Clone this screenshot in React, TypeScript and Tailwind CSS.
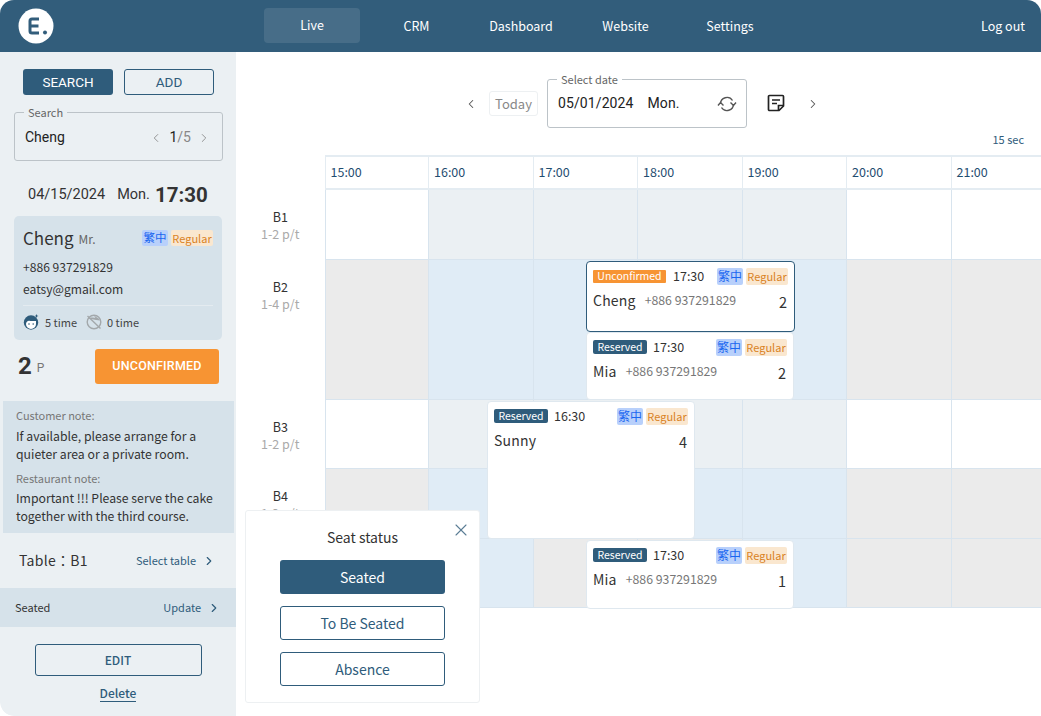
import { ChevronLeft, ChevronRight, X } from 'lucide-react'

const times = ['15:00', '16:00', '17:00', '18:00', '19:00', '20:00', '21:00']
const navItems = ['CRM', 'Dashboard', 'Website', 'Settings']

// cell fills per row, one per time column
const W = 'bg-white'
const S = 'bg-[#ebf0f3]'
const G = 'bg-[#ebebeb]'
const B = 'bg-[#e0ecf6]'

const rows = [
  { name: 'B1', seats: '1-2 p/t', h: 'h-[70px]', cells: [W, S, S, S, S, W, W] },
  { name: 'B2', seats: '1-4 p/t', h: 'h-[140px]', cells: [G, B, B, B, B, G, G] },
  { name: 'B3', seats: '1-2 p/t', h: 'h-[69px]', cells: [W, S, S, S, S, W, W] },
  { name: 'B4', seats: '1-2 p/t', h: 'h-[70px]', cells: [G, B, B, B, B, G, G] },
  { name: 'B5', seats: '1-2 p/t', h: 'h-[69px]', cells: [G, B, G, G, B, G, G] },
]

function Tags() {
  return (
    <div className="ml-auto flex items-center gap-[3px]">
      <span className="flex h-[17px] w-[26px] items-center justify-center rounded-[2px] bg-[#b8d0fb] text-[12px] text-[#1a66f0]">
        繁中
      </span>
      <span className="flex h-[17px] w-[42px] items-center justify-center rounded-[2px] bg-[#fae7cf] text-[11px] text-[#d9821f]">
        Regular
      </span>
    </div>
  )
}

function Booking({
  className,
  status,
  time,
  name,
  phone,
  count,
}: {
  className: string
  status: 'Unconfirmed' | 'Reserved'
  time: string
  name: string
  phone?: string
  count: number
}) {
  return (
    <div className={`absolute rounded-[4px] border bg-white px-[6px] pt-[5px] ${className}`}>
      <div className="flex h-[18px] items-center">
        {status === 'Unconfirmed' ? (
          <span className="mr-[7px] flex h-[13px] w-[73px] items-center justify-center rounded-[1px] bg-[#f79433] text-[10.5px] text-white">
            {status}
          </span>
        ) : (
          <span className="mr-[6px] flex h-[14px] w-[54px] items-center justify-center rounded-[2px] bg-[#2f5c7b] text-[10.5px] text-white">
            {status}
          </span>
        )}
        <span className="text-[12.5px] text-[#333]">{time}</span>
        <Tags />
      </div>
      <div className="mt-[2px] flex items-center text-[#333]">
        <span className="text-[14px] leading-[22px] tracking-[0.2px]">{name}</span>
        {phone && <span className="ml-[9px] text-[12.3px] text-[#777]">{phone}</span>}
        <span className="mt-[4px] ml-auto pr-[1px] text-[14.5px]">{count}</span>
      </div>
    </div>
  )
}

function Timetable() {
  return (
    <div className="relative grid grid-cols-[88.5px_repeat(7,104.5px)] text-[#2f5c7b]">
      <div className="h-[35px]" />
      {times.map((t, i) => (
        <div
          key={t}
          className={`flex h-[35px] items-center border-t-2 border-r border-b-2 border-[#e4ecf2] pl-[5px] text-[12.5px] text-[#1f4d70] ${i === 0 ? 'border-l' : ''}`}
        >
          {t}
        </div>
      ))}
      {rows.map((row) => (
        <div key={row.name} className="contents">
          <div className={`${row.h} pt-[18px] text-center text-[12.5px] leading-[17px]`}>
            <div className="text-[#333]">{row.name}</div>
            <div className="text-[#aaa]">{row.seats}</div>
          </div>
          {row.cells.map((c, i) => (
            <div key={i} className={`${row.h} ${c} border-r border-b border-[#d8e4ee] ${i === 0 ? 'border-l' : ''}`} />
          ))}
        </div>
      ))}

      <Booking
        className="top-[106px] left-[350px] h-[71px] w-[209px] border-[#2f5c7b]"
        status="Unconfirmed"
        time="17:30"
        name="Cheng"
        phone="+886 937291829"
        count={2}
      />
      <Booking
        className="top-[177px] left-[350px] h-[68px] w-[208px] border-[#dfe8ef]"
        status="Reserved"
        time="17:30"
        name="Mia"
        phone="+886 937291829"
        count={2}
      />
      <Booking
        className="top-[246px] left-[251px] h-[138px] w-[208px] border-[#dfe8ef]"
        status="Reserved"
        time="16:30"
        name="Sunny"
        count={4}
      />
      <Booking
        className="top-[385px] left-[350px] h-[69px] w-[208px] border-[#dfe8ef]"
        status="Reserved"
        time="17:30"
        name="Mia"
        phone="+886 937291829"
        count={1}
      />

      {/* seat status popover */}
      <div className="absolute top-[355px] left-[9px] flex h-[193px] w-[235px] flex-col items-center rounded-[3px] border border-[#edf0f2] bg-white pt-[16px] text-[#2f5c7b]">
        <X className="absolute top-[9px] right-[8px] h-[20px] w-[20px] text-[#5b7d95]" strokeWidth={1.3} />
        <div className="text-[14px] leading-[20px] text-[#333]">Seat status</div>
        <button
          type="button"
          className="mt-[13px] h-[34px] w-[165px] rounded-[3px] bg-[#2f5c7b] text-[14px] text-white"
        >
          Seated
        </button>
        <button type="button" className="mt-[12px] h-[34px] w-[165px] rounded-[3px] border border-[#2f5c7b] text-[14px]">
          To Be Seated
        </button>
        <button type="button" className="mt-[12px] h-[34px] w-[165px] rounded-[3px] border border-[#2f5c7b] text-[14px]">
          Absence
        </button>
      </div>
    </div>
  )
}

function Sidebar() {
  return (
    <aside className="flex w-[236px] shrink-0 flex-col rounded-bl-[14px] bg-[#ebf0f3] text-[#333]">
      <div className="flex gap-[11px] pt-[17px] pl-[23px] font-['Roboto',sans-serif] text-[13.5px]">
        <button type="button" className="h-[26px] w-[90px] rounded-[3px] bg-[#2f5c7b] text-white">
          SEARCH
        </button>
        <button type="button" className="h-[26px] w-[90px] rounded-[3px] border border-[#2f5c7b] text-[#2f5c7b]">
          ADD
        </button>
      </div>

      <fieldset className="mt-[11px] mr-[13px] ml-[14px] h-[55px] rounded-[3px] border border-[#bcc3c8] px-[10px]">
        <legend className="ml-[-1px] px-[4px] text-[11px] leading-[12px] text-[#666]">Search</legend>
        <div className="mt-[9px] flex items-center font-['Roboto',sans-serif] text-[14px] text-[#222]">
          Cheng
          <ChevronLeft className="ml-auto h-[14px] w-[14px] text-[#888]" strokeWidth={1.5} />
          <span className="ml-[6px] text-[#888]">
            <span className="text-[#222]">1</span>/5
          </span>
          <ChevronRight className="mr-[1px] ml-[6px] h-[14px] w-[14px] text-[#888]" strokeWidth={1.5} />
        </div>
      </fieldset>

      <div className="mt-[19px] flex h-[30px] items-center pl-[28px] font-['Roboto',sans-serif] text-[14.5px] text-[#333]">
        04/15/2024
        <span className="ml-[12px]">Mon.</span>
        <span className="ml-[5px] text-[20.5px] font-bold">17:30</span>
      </div>

      <div className="mx-[14px] mt-[6px] h-[124px] rounded-[5px] bg-[#d6e2ea] px-[9px] pt-[10px]">
        <div className="flex h-[24px] items-center">
          <span className="text-[17px]">Cheng</span>
          <span className="mt-[2px] ml-[5px] text-[12px] text-[#666]">Mr.</span>
          <div className="ml-auto flex items-center gap-[3px]">
            <span className="flex h-[16px] w-[26px] items-center justify-center rounded-[2px] bg-[#b8d0fb] text-[11.5px] text-[#1a66f0]">
              繁中
            </span>
            <span className="flex h-[16px] w-[42px] items-center justify-center rounded-[2px] bg-[#fae7cf] text-[11px] text-[#d9821f]">
              Regular
            </span>
          </div>
        </div>
        <div className="mt-[6px] text-[12.1px] leading-[22px]">+886 937291829</div>
        <div className="text-[12.1px] leading-[22px]">eatsy@gmail.com</div>
        <div className="mt-[5px] flex h-[30px] items-center border-t border-[#e4ebf0] pt-[3px] text-[11px] text-[#444]">
          <svg viewBox="0 0 16 16" className="h-[16px] w-[16px]">
            <circle cx="8" cy="8.5" r="7.2" fill="#2f5c7b" />
            <path d="M3 10c0-2 1.500-3 3-3.200 2 .4 5 .2 7 .2v3a5 5 0 0 1-10 0z" fill="#fff" />
            <circle cx="6" cy="10" r=".8" fill="#2f5c7b" />
            <circle cx="10.200" cy="10" r=".8" fill="#2f5c7b" />
            <path d="M13.500 0l.6 1.400 1.400.6-1.400.6-.6 1.400-.6-1.400-1.400-.6 1.400-.6z" fill="#2f5c7b" />
          </svg>
          <span className="ml-[6px]">5 time</span>
          <svg viewBox="0 0 16 16" className="ml-[9px] h-[16px] w-[16px]">
            <circle cx="8" cy="8" r="6.800" fill="none" stroke="#a3a8ab" strokeWidth="1.400" />
            <path d="M2 4.500C5 3 11 3 14 6.500L10 6 5 5z M8 1.500l6 4-4-.5z" fill="#a3a8ab" />
            <path d="M1.500 2l13 12.500" stroke="#a3a8ab" strokeWidth="1.400" />
          </svg>
          <span className="ml-[5px]">0 time</span>
        </div>
      </div>

      <div className="mt-[9px] flex h-[34px] items-center pl-[18px] font-['Roboto',sans-serif]">
        <span className="text-[24px] leading-none font-bold">2</span>
        <span className="mt-[4px] ml-[5px] text-[12px] text-[#777]">P</span>
        <button
          type="button"
          className="mr-[17px] ml-auto h-[35px] w-[124px] rounded-[3px] bg-[#f79433] text-[12.5px] font-medium tracking-[0.2px] text-white"
        >
          UNCONFIRMED
        </button>
      </div>

      <div className="mt-[18px] mr-[2px] ml-[3px] h-[132px] bg-[#d6e2ea] px-[13px] pt-[6px] text-[12.25px] leading-[17.5px]">
        <div className="text-[11px] leading-[16px] text-[#777]">Customer note:</div>
        <p className="mt-[5px]">If available, please arrange for a quieter area or a private room.</p>
        <div className="mt-[7px] text-[11px] leading-[16px] text-[#777]">Restaurant note:</div>
        <p className="mt-[4px]">Important !!! Please serve the cake together with the third course.</p>
      </div>

      <div className="flex h-[55px] items-center pr-[20px] pl-[19px]">
        <span className="text-[14px] tracking-[0.3px]">Table：B1</span>
        <span className="ml-auto text-[11px] text-[#2f5c7b]">Select table</span>
        <ChevronRight className="ml-[6px] h-[14px] w-[14px] text-[#2f5c7b]" strokeWidth={2} />
      </div>

      <div className="flex h-[39px] items-center bg-[#d6e2ea] pr-[15px] pl-[15px] text-[11px]">
        Seated
        <span className="ml-auto text-[#2f5c7b]">Update</span>
        <ChevronRight className="ml-[6px] h-[14px] w-[14px] text-[#2f5c7b]" strokeWidth={2} />
      </div>

      <button
        type="button"
        className="mx-auto mt-[17px] h-[32px] w-[167px] rounded-[3px] border border-[#2f5c7b] text-[12px] font-medium text-[#2f5c7b]"
      >
        EDIT
      </button>
      <span className="mx-auto mt-[9px] border-b border-[#2f5c7b] text-[12px] leading-[16px] font-medium text-[#2f5c7b]">
        Delete
      </span>
    </aside>
  )
}

export default function App() {
  return (
    <div className="flex h-[716px] w-[1041px] flex-col overflow-hidden rounded-[14px] bg-white font-['Noto_Sans_CJK_TC','Noto_Sans',sans-serif]">
      <header className="flex h-[52px] shrink-0 items-center bg-[#325d7b] text-[12.5px] text-white">
        <svg viewBox="0 0 36 36" className="ml-[18px] h-[36px] w-[36px]">
          <circle cx="18" cy="18" r="17.500" fill="#fff" />
          <path d="M21 11h-7a2 2 0 0 0-2 2v10a2 2 0 0 0 2 2h7M12.500 18h8" fill="none" stroke="#325d7b" strokeWidth="3" />
          <circle cx="27" cy="24.500" r="2" fill="#325d7b" />
        </svg>
        <nav className="ml-[210px] flex items-center">
          <a className="mb-[1px] flex h-[35px] w-[96px] items-center justify-center rounded-[4px] bg-white/10">Live</a>
          {navItems.map((item, i) => (
            <a key={item} className={`text-center ${i % 2 === 0 ? 'w-[113px]' : 'w-[96px]'}`}>
              {item}
            </a>
          ))}
        </nav>
        <a className="ml-auto pr-[16px]">Log out</a>
      </header>

      <div className="flex min-h-0 flex-1">
        <Sidebar />
        <main className="min-w-0 flex-1 overflow-hidden">
          <div className="flex h-[103px] items-start">
            <ChevronLeft className="mt-[45px] ml-[228px] h-[14px] w-[14px] text-[#555]" strokeWidth={1.8} />
            <span className="mt-[39px] ml-[11px] flex h-[25px] w-[49px] items-center justify-center rounded-[3px] border border-[#edf0f2] text-[13px] text-[#888]">
              Today
            </span>
            <fieldset className="mt-[21px] ml-[9px] h-[55px] w-[200px] rounded-[3px] border border-[#bcc3c8] px-[10px]">
              <legend className="ml-[-1px] px-[4px] text-[11px] leading-[12px] text-[#666]">Select date</legend>
              <div className="mt-[8px] flex items-center font-['Roboto',sans-serif] text-[14px] tracking-[0.1px] text-[#222]">
                05/01/2024
                <span className="ml-[14px]">Mon.</span>
                <svg viewBox="0 0 20 20" className="mr-[-1px] ml-auto h-[20px] w-[20px]" fill="none" stroke="#555" strokeWidth="1.400">
                  <path d="M3.500 10A6.500 6.500 0 0 1 15.500 6.500M16.500 10A6.500 6.500 0 0 1 4.500 13.500" />
                  <path d="M13.500 8.500l3 3 2.500-3M1 11.500l2.500-3 3 3" />
                </svg>
              </div>
            </fieldset>
            <svg viewBox="0 0 18 18" className="mt-[42px] ml-[20px] h-[18px] w-[18px]" fill="none" stroke="#222" strokeWidth="1.700">
              <path d="M2.500 1.500h13a1 1 0 0 1 1 1V12l-4.500 4.500h-9.500a1 1 0 0 1-1-1v-13a1 1 0 0 1 1-1z" />
              <path d="M5 6h8M5 9.500h5M11.500 16v-4.500H16.500" />
            </svg>
            <ChevronRight className="mt-[45px] ml-[21px] h-[14px] w-[14px] text-[#555]" strokeWidth={1.8} />
          </div>
          <div className="flex h-0 justify-end">
            <span className="-mt-[24px] pr-[17px] text-[11px] text-[#2f5c7b]">15 sec</span>
          </div>
          <Timetable />
        </main>
      </div>
    </div>
  )
}
